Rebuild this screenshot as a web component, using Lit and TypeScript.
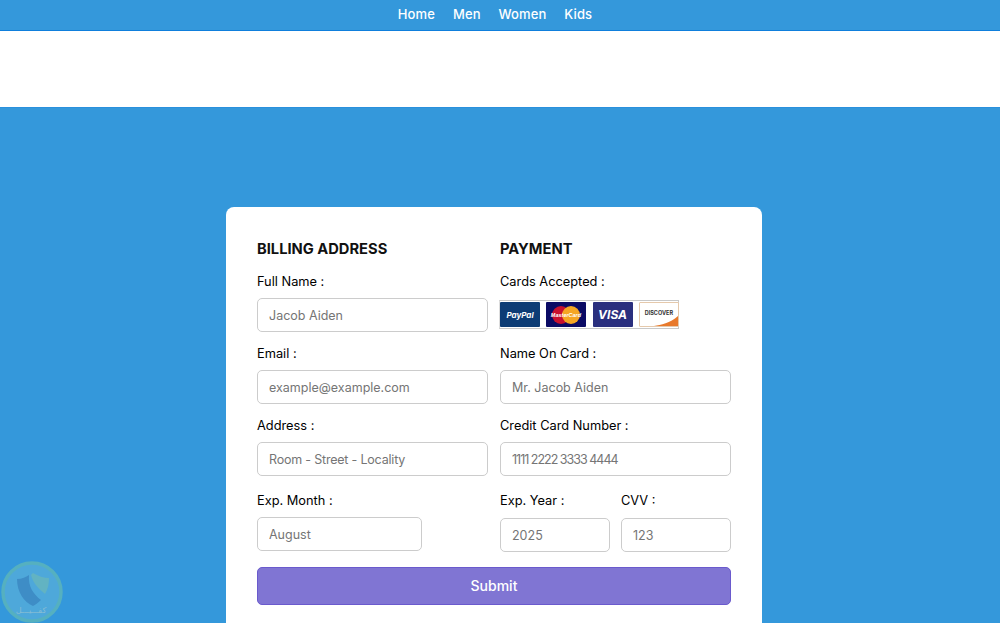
import {LitElement, html, css} from 'lit';
import {customElement} from 'lit/decorators.js';

@customElement('app-root')
export class AppRoot extends LitElement {
  static override styles = css`
    :host {
      display: block;
      height: 623px;
      overflow: hidden;
      position: relative;
      background: #3498db;
      font-family: Inter, "Open Sans", "Liberation Sans", sans-serif;
      color: #000;
    }
    * {
      box-sizing: border-box;
    }
    .nav {
      height: 31px;
      background: #3498db;
      border-bottom: 1px solid #0f7fdc;
      display: flex;
      justify-content: center;
      align-items: center;
      gap: 18px;
      padding: 0 10px 2px 0;
    }
    .nav a {
      color: #fff;
      font-size: 13px;
      font-weight: 450;
      letter-spacing: 0.1px;
    }
    .band {
      height: 77px;
      background: #fff;
      border-bottom: 1px solid #2a90dd;
    }
    .page {
      display: flex;
      justify-content: center;
      padding: 99px 0 0 0;
    }
    .card {
      width: 536px;
      height: 460px;
      margin-left: -12px;
      background: #fff;
      border-radius: 8px 8px 0 0;
      padding: 31px 31px 0 31px;
      display: flex;
      flex-direction: column;
    }
    .cols {
      display: grid;
      grid-template-columns: 231px 231px;
      column-gap: 12px;
    }
    h3 {
      margin: 0;
      height: 24px;
      line-height: 22px;
      font-size: 14.7px;
      font-weight: 700;
      color: #111;
    }
    .col {
      display: flex;
      flex-direction: column;
    }
    .field {
      display: flex;
      flex-direction: column;
    }
    .field.first {
      margin-top: 10px;
    }
    .field label {
      height: 18px;
      line-height: 20px;
      font-size: 12.8px;
      font-weight: 430;
      margin-bottom: 8px;
    }
    .field + .field {
      margin-top: 12px;
    }
    input {
      width: 100%;
      height: 34px;
      border: 1px solid #ccc;
      border-radius: 5px;
      padding: 0 11px;
      font: inherit;
      font-size: 12.5px;
      background: #fff;
      outline: none;
    }
    input::placeholder {
      color: #757575;
      opacity: 1;
    }
    input.tight {
      letter-spacing: -0.2px;
    }
    input.digits {
      letter-spacing: -1px;
    }
    .field.exp {
      margin-top: 15px;
    }
    .month {
      width: 165px;
    }
    .split {
      display: grid;
      grid-template-columns: 110px 110px;
      column-gap: 11px;
      margin-top: 15px;
    }
    .split .field {
      margin: 0;
    }
    .split .field label {
      margin-bottom: 9px;
    }
    .strip {
      width: 180px;
      height: 29px;
      margin: 2px 0 3px -1px;
      border: 1px solid #c9c9c9;
      border-left-color: #ddd;
      display: flex;
      align-items: center;
      gap: 6.3px;
      background: #fff;
    }
    .pay {
      width: 40px;
      height: 25px;
      border-radius: 1px;
      display: flex;
      align-items: center;
      justify-content: center;
      color: #fff;
      font-weight: 700;
      flex: none;
    }
    .pay.paypal {
      background: #0d3c75;
      font-size: 8px;
      font-style: italic;
    }
    .pay.mc {
      background: #0a0a64;
    }
    .pay.visa {
      background: #2a2f7e;
      font-size: 12px;
      font-style: italic;
    }
    .pay.disc {
      background: #fff;
      border: 1px solid #e5c9ac;
      color: #333;
      font-size: 5.5px;
      position: relative;
      overflow: hidden;
    }
    .pay.disc svg {
      position: absolute;
      right: 0;
      bottom: 0;
    }
    .pay.disc span {
      position: relative;
      margin-top: -3px;
    }
    .pay svg text {
      font-family: "Liberation Sans", sans-serif;
    }
    button {
      height: 38px;
      margin: 15px 0 0 0;
      width: 474px;
      border: 1px solid #6a5acd;
      border-radius: 5px;
      background: #8075d3;
      color: #fff;
      font: inherit;
      font-size: 14px;
      font-weight: 500;
      padding: 0 0 2px 0;
    }
    .shield {
      position: absolute;
      left: 0;
      bottom: 0;
      width: 66px;
      height: 66px;
    }
  `;

  private _field(label: string, placeholder: string, cls = '', inputCls = '') {
    return html`
      <div class="field ${cls}">
        <label>${label}</label>
        <input class=${inputCls} type="text" placeholder=${placeholder} />
      </div>
    `;
  }

  override render() {
    return html`
      <nav class="nav">
        <a>Home</a>
        <a>Men</a>
        <a>Women</a>
        <a>Kids</a>
      </nav>
      <div class="band"></div>
      <main class="page">
        <form class="card">
          <div class="cols">
            <div class="col">
              <h3>BILLING ADDRESS</h3>
              ${this._field('Full Name :', 'Jacob Aiden', 'first')}
              ${this._field('Email :', 'example@example.com')}
              ${this._field('Address :', 'Room - Street - Locality', '', 'tight')}
              <div class="month">
                ${this._field('Exp. Month :', 'August', 'exp')}
              </div>
            </div>
            <div class="col">
              <h3>PAYMENT</h3>
              <div class="field first">
                <label>Cards Accepted :</label>
                <div class="strip">
                  <span class="pay paypal">PayPal</span>
                  <span class="pay mc">
                    <svg width="32" height="20" viewBox="0 0 32 20">
                      <circle cx="11" cy="10" r="9" fill="#c8102e"></circle>
                      <circle cx="21" cy="10" r="9" fill="#f5a623"></circle>
                      <text x="16" y="12" font-size="5.5" font-weight="700" font-style="italic" text-anchor="middle" fill="#fff">MasterCard</text>
                    </svg>
                  </span>
                  <span class="pay visa">VISA</span>
                  <span class="pay disc">
                    <svg width="38" height="23" viewBox="0 0 38 23">
                      <path d="M38 13 C30 20 21 22 14 23 L38 23 Z" fill="#e8792b"></path>
                    </svg>
                    <span>DISCOVER</span>
                  </span>
                </div>
              </div>
              ${this._field('Name On Card :', 'Mr. Jacob Aiden')}
              ${this._field('Credit Card Number :', '1111 2222 3333 4444', '', 'digits')}
              <div class="split">
                ${this._field('Exp. Year :', '2025')}
                ${this._field('CVV :', '123')}
              </div>
            </div>
          </div>
          <button type="button">Submit</button>
        </form>
      </main>
      <svg class="shield" viewBox="0 0 66 66">
        <circle cx="32" cy="35" r="29" fill="#4ea8da" stroke="#55b0c0" stroke-width="3.5"></circle>
        <path d="M17 22 C22 22 26 20 29 18 C28 29 33 37 41 43 C38 46 35 48 33 49 C24 45 17 35 17 22 Z" fill="#3e8dc6"></path>
        <path d="M33 16 C38 19 44 21 49 21 C49 27 48 32 45 37 C38 31 33 26 31 18 Z" fill="#62b3c2"></path>
        <text x="31" y="56" font-size="8" text-anchor="middle" fill="#86bdd4" font-family="DejaVu Sans">كفـــيـــل</text>
      </svg>
    `;
  }
}

declare global {
  interface HTMLElementTagNameMap {
    'app-root': AppRoot;
  }
}
